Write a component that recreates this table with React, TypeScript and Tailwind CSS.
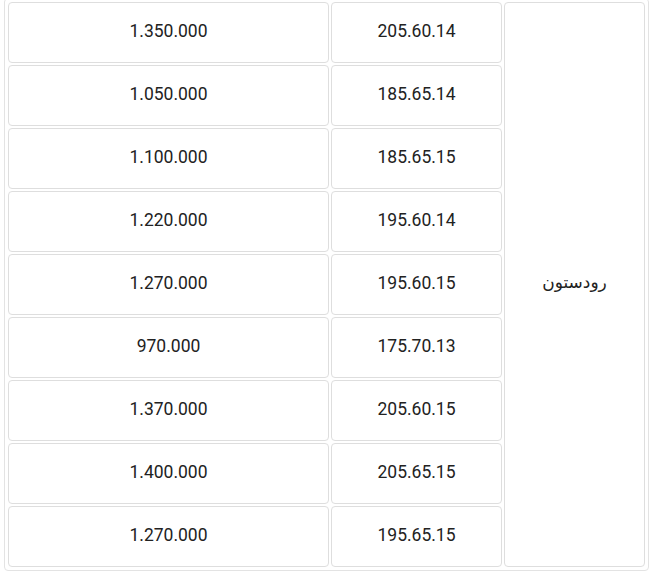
import React from 'react';

// size / price rows for the single brand
const rows: { size: string; price: string }[] = [
  { size: '205.60.14', price: '1.350.000' },
  { size: '185.65.14', price: '1.050.000' },
  { size: '185.65.15', price: '1.100.000' },
  { size: '195.60.14', price: '1.220.000' },
  { size: '195.60.15', price: '1.270.000' },
  { size: '175.70.13', price: '970.000' },
  { size: '205.60.15', price: '1.370.000' },
  { size: '205.65.15', price: '1.400.000' },
  { size: '195.65.15', price: '1.270.000' },
];

function Cell({ children }: { children: React.ReactNode }) {
  return (
    <div className="h-[61px] pb-[3px] flex items-center justify-center border border-[#dedede] rounded-[4px] bg-white">
      <span dir="ltr">{children}</span>
    </div>
  );
}

export default function App() {
  return (
    <div className="w-[649px] h-[574px] overflow-hidden bg-white">
      <div
        dir="rtl"
        className="ml-[4px] mt-[-2px] w-[645px] border border-[#e3e3e3] rounded-[4px] p-[3px] text-[17.5px] text-[#222] font-['Roboto','DejaVu_Sans',sans-serif]"
      >
        <div className="grid grid-cols-[141px_171px_1fr] gap-[2px]">
          <div className="row-span-9 pb-[3px] flex items-center justify-center border border-[#dedede] rounded-[4px] text-[17px]">
            رودستون
          </div>
          {rows.map((r, i) => (
            <React.Fragment key={i}>
              <Cell>{r.size}</Cell>
              <Cell>{r.price}</Cell>
            </React.Fragment>
          ))}
        </div>
      </div>
    </div>
  );
}
